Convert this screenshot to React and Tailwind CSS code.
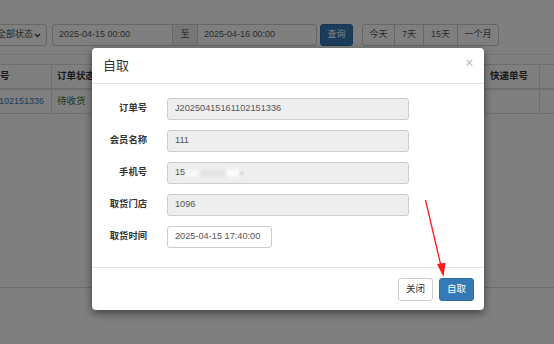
import React from 'react'

const font = { fontFamily: '"Liberation Sans", Arial, "Noto Sans CJK SC", sans-serif' }

const fields = [
  { label: '订单号', value: 'J20250415161102151336', disabled: true },
  { label: '会员名称', value: '111', disabled: true },
  { label: '手机号', value: '15', disabled: true, masked: true },
  { label: '取货门店', value: '1096', disabled: true },
  { label: '取货时间', value: '2025-04-15 17:40:00', short: true },
]

const FilterBar = () => (
  <div className="flex items-center ml-[-12px] text-[9px] text-[#555]">
    <div className="flex items-center justify-between w-[59px] h-[22px] pl-2 pr-[4px] border border-[#ccc] rounded-[3px] bg-white">
      <span>全部状态</span>
      <svg width="7" height="5" viewBox="0 0 7 5" className="mr-[1px]">
        <path d="M1 1l2.5 2.5L6 1" stroke="#444" strokeWidth="1.4" fill="none" />
      </svg>
    </div>
    <div className="flex ml-[5px] h-[22px]">
      <div className="w-[121px] border border-[#ccc] rounded-l-[3px] flex items-center pl-[6px]">2025-04-15 00:00</div>
      <div className="w-[24px] border-y border-[#ccc] bg-[#eee] flex items-center justify-center">至</div>
      <div className="w-[120px] border border-[#ccc] rounded-r-[3px] flex items-center pl-[6px]">2025-04-16 00:00</div>
    </div>
    <button className="ml-[3px] w-[33px] h-[22px] rounded-[3px] bg-[#337ab7] border border-[#2e6da4] text-white">查询</button>
    <div className="flex ml-[9px] h-[22px]">
      {['今天', '7天', '15天', '一个月'].map((t, i) => (
        <div
          key={t}
          className={`flex items-center justify-center border border-[#ccc] bg-white ${i > 0 ? '-ml-px' : 'rounded-l-[3px]'} ${i === 3 ? 'rounded-r-[3px] w-[42px]' : i === 2 ? 'w-[35px]' : i === 1 ? 'w-[30px]' : 'w-[33px]'}`}
        >
          {t}
        </div>
      ))}
    </div>
  </div>
)

const Table = () => (
  <div className="mt-[9px] border-t border-[#ddd] text-[9.5px]">
    <div className="flex h-[25px] border-b-2 border-[#ddd] font-bold text-[#333]">
      <div className="w-[52px] border-r border-[#ddd] flex items-center">号</div>
      <div className="w-[432px] flex items-center pl-[5px]">订单状态</div>
      <div className="w-[56px] border-x border-[#ddd] flex items-center pl-[5px]">快递单号</div>
      <div className="flex-1" />
    </div>
    <div className="flex h-[24px] border-b border-[#ddd]">
      <div className="w-[52px] border-r border-[#ddd] flex items-center justify-end pr-[7px] text-[#337ab7] text-[9px]">102151336</div>
      <div className="w-[432px] flex items-center pl-[5px] text-[#3c763d]">待收货</div>
      <div className="w-[56px] border-x border-[#ddd]" />
      <div className="flex-1" />
    </div>
  </div>
)

const Modal = () => (
  <div className="absolute left-[92px] top-[48px] w-[392px] bg-white rounded-[4px] shadow-[0_3px_9px_rgba(0,0,0,0.5)]">
    <div className="h-[36px] border-b border-[#e5e5e5] flex items-center justify-between pl-[11px] pr-[11px]">
      <span className="text-[13px] text-[#333]">自取</span>
      <span className="text-[13px] font-bold text-[#c8c8c8] leading-none mt-[-6px]">×</span>
    </div>
    <div className="pt-[14px] pb-[19px] flex flex-col gap-[10px]">
      {fields.map((f) => (
        <div key={f.label} className="flex items-center h-[22px]">
          <div className="w-[55px] text-right text-[9.3px] font-bold text-[#333]">{f.label}</div>
          <div
            className={`ml-[20px] h-[22px] border border-[#ccc] rounded-[3px] flex items-center pl-[7px] text-[9.2px] text-[#555] ${f.short ? 'w-[105px] bg-white' : 'w-[242px] bg-[#eee]'}`}
          >
            {f.value}
            {f.masked && (
              <span className="flex items-center ml-[1px]">
                <span className="w-[14px] h-[7px] bg-[#f8f8f8] blur-[1.5px]" />
                <span className="w-[26px] h-[5px] bg-[#e0e0e0] blur-[1.5px]" />
                <span className="w-[14px] h-[8px] bg-[#fafafa] blur-[1.5px]" />
                <span className="w-[3px] h-[3px] bg-[#ccc] blur-[1px]" />
              </span>
            )}
          </div>
        </div>
      ))}
    </div>
    <div className="border-t border-[#e5e5e5] h-[43px] flex items-center justify-end gap-[6px] pr-[10px]">
      <button className="w-[35px] h-[23px] border border-[#ccc] rounded-[3px] bg-white text-[9.5px] text-[#333]">关闭</button>
      <button className="w-[35px] h-[23px] border border-[#2e6da4] rounded-[3px] bg-[#337ab7] text-[9.5px] text-white">自取</button>
    </div>
  </div>
)

export default function App() {
  return (
    <div className="relative w-[554px] h-[344px] overflow-hidden bg-white" style={font}>
      <div className="pt-[24px]">
        <FilterBar />
        <div className="mt-[8px] border-t border-[#eee]" />
        <Table />
        <div className="mt-[173px] border-t border-[#ddd]" />
      </div>
      <div className="absolute inset-0 bg-black/50" />
      <Modal />
      <svg className="absolute left-0 top-0" width="554" height="344" viewBox="0 0 554 344">
        <line x1="425.5" y1="200" x2="441" y2="266" stroke="#ff1a1a" strokeWidth="1.3" />
        <path d="M437 264l6.5 13 2-14.2z" fill="#ff1a1a" />
      </svg>
    </div>
  )
}
